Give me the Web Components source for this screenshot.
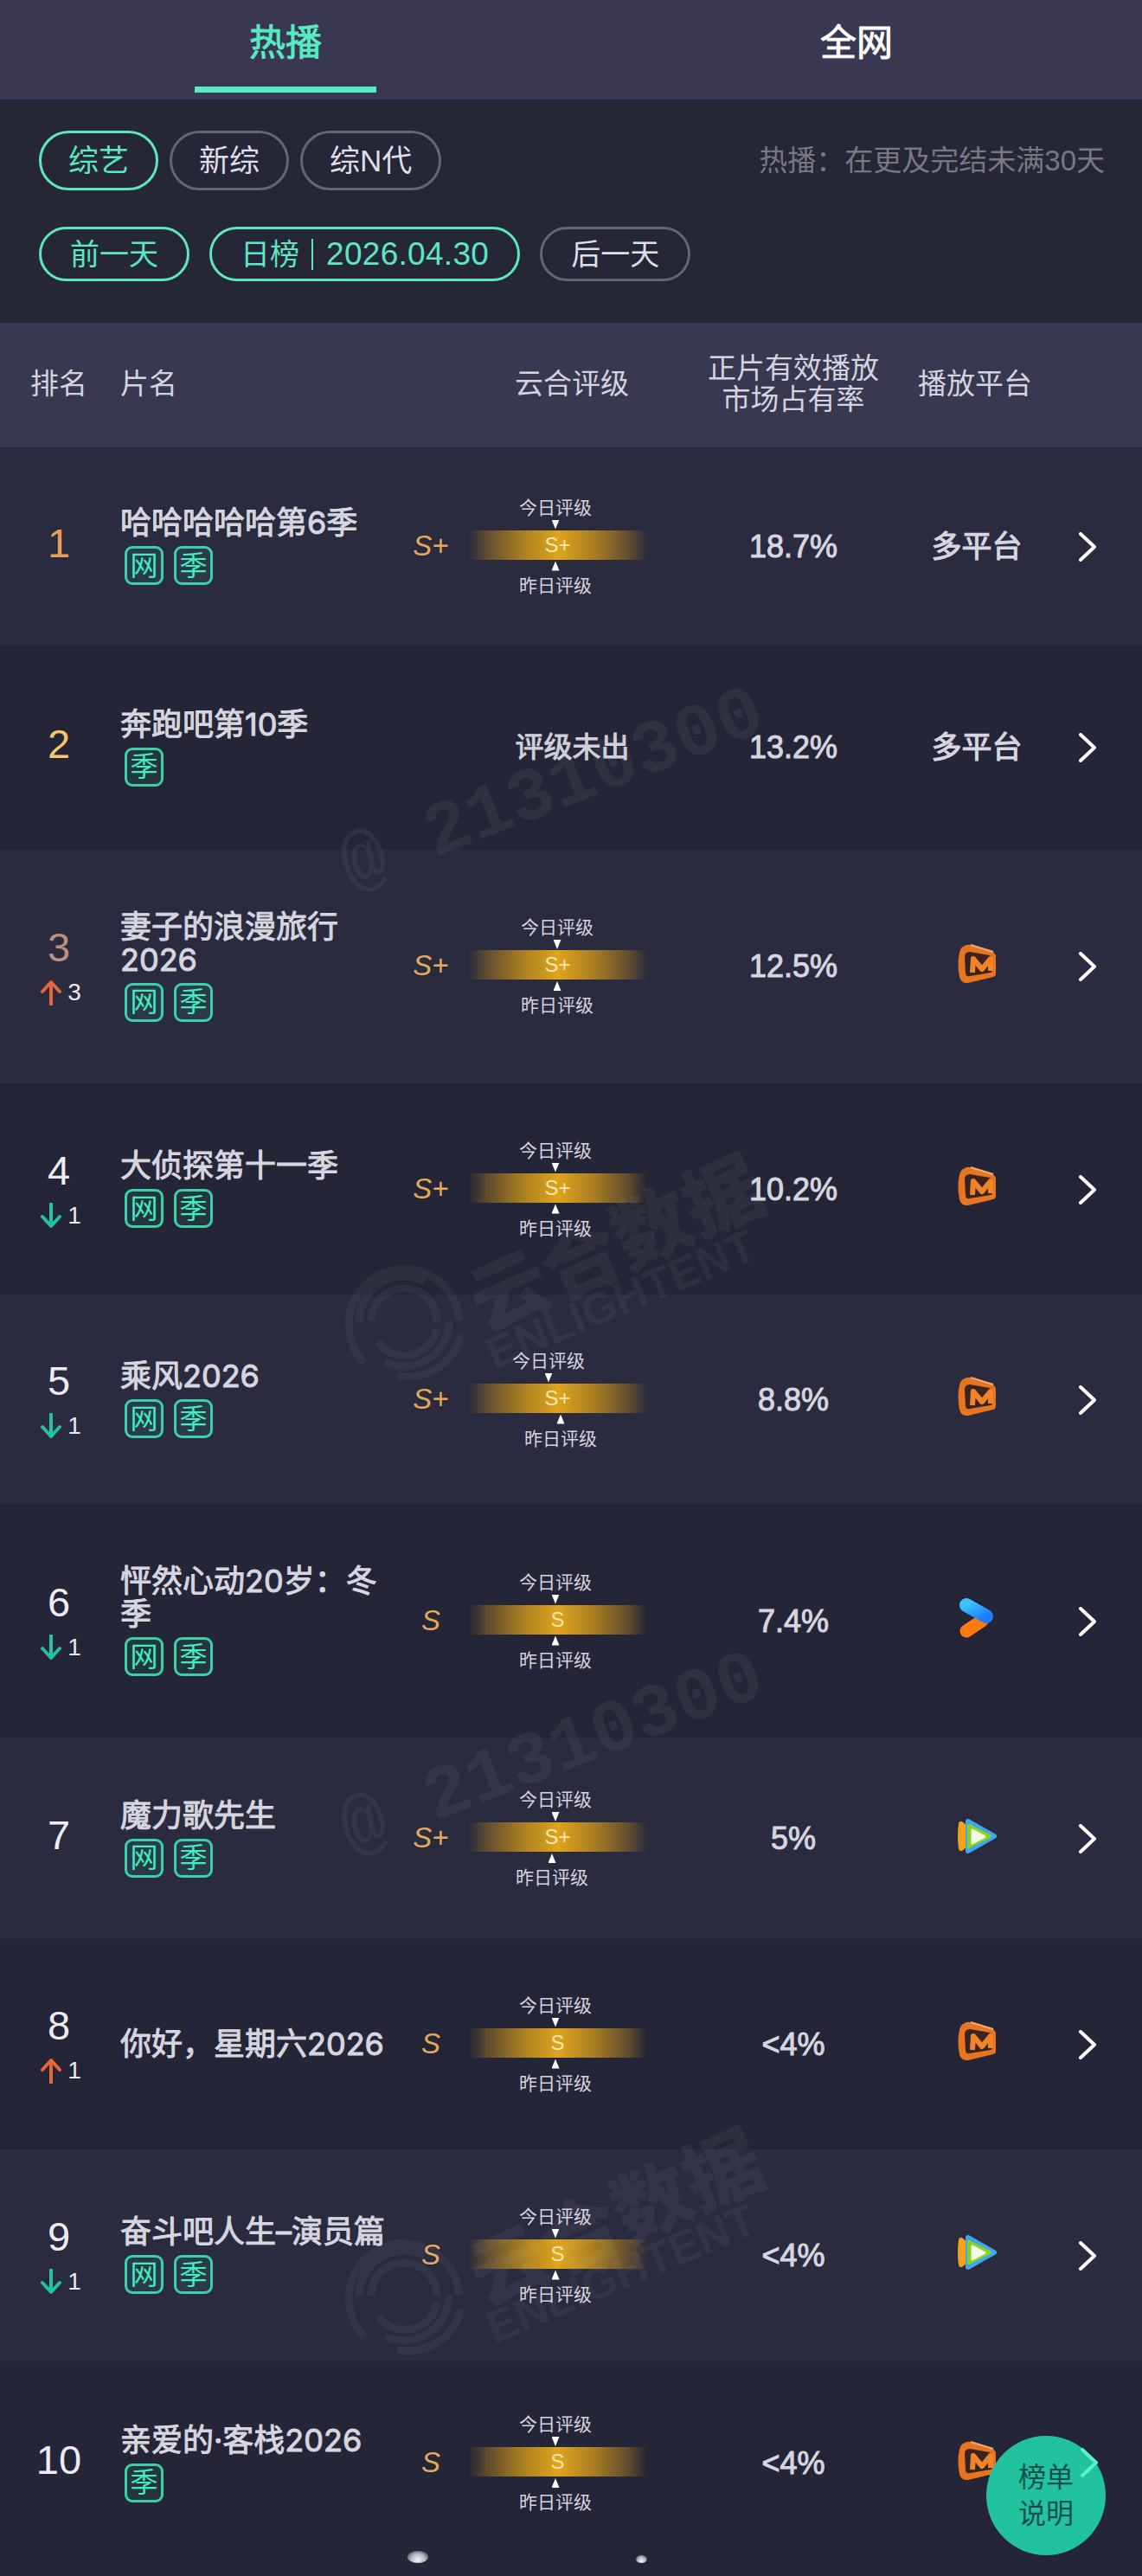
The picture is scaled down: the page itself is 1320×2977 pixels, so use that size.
<!DOCTYPE html>
<html lang="zh">
<head>
<meta charset="utf-8">
<title>云合榜单</title>
<style>
  html, body { margin: 0; padding: 0; background: #242536; }
  body { font-family: "Liberation Sans", "Noto Sans CJK SC", sans-serif; }
  #page { position: relative; width: 1320px; height: 2977px; overflow: hidden; }
</style>
</head>
<body>
<div id="page">
  <rank-tabs></rank-tabs>

  <filter-bar note="热播：在更及完结未满30天">
    <pill-btn slot="top" active>综艺</pill-btn>
    <pill-btn slot="top">新综</pill-btn>
    <pill-btn slot="top">综N代</pill-btn>
    <pill-btn slot="date" small active>前一天</pill-btn>
    <pill-btn slot="date" small active>日榜<i></i><b>2026.04.30</b></pill-btn>
    <pill-btn slot="date" small>后一天</pill-btn>
  </filter-bar>

  <table-head></table-head>

  <rank-row no="1" tone="#e99f56" h="229" odd share="18.7%">
    <span slot="title">哈哈哈哈哈第6季</span>
    <show-tag slot="tags">网</show-tag><show-tag slot="tags">季</show-tag>
    <grade-meter slot="rating" grade="S+" today="-3" yesterday="-3"></grade-meter>
    <platform-mark slot="platform" label="多平台"></platform-mark>
  </rank-row>

  <rank-row no="2" tone="#f4c76b" h="236" share="13.2%">
    <span slot="title">奔跑吧第10季</span>
    <show-tag slot="tags">季</show-tag>
    <grade-meter slot="rating" none></grade-meter>
    <platform-mark slot="platform" label="多平台"></platform-mark>
  </rank-row>

  <rank-row no="3" tone="#bd8f7d" h="270" odd share="12.5%" dir="up" by="3">
    <span slot="title">妻子的浪漫旅行2026</span>
    <show-tag slot="tags">网</show-tag><show-tag slot="tags">季</show-tag>
    <grade-meter slot="rating" grade="S+" today="-1" yesterday="-1"></grade-meter>
    <platform-mark slot="platform" kind="mango"></platform-mark>
  </rank-row>

  <rank-row no="4" h="245" share="10.2%" dir="down" by="1">
    <span slot="title">大侦探第十一季</span>
    <show-tag slot="tags">网</show-tag><show-tag slot="tags">季</show-tag>
    <grade-meter slot="rating" grade="S+" today="-3" yesterday="-3"></grade-meter>
    <platform-mark slot="platform" kind="mango"></platform-mark>
  </rank-row>

  <rank-row no="5" h="241" odd share="8.8%" dir="down" by="1">
    <span slot="title">乘风2026</span>
    <show-tag slot="tags">网</show-tag><show-tag slot="tags">季</show-tag>
    <grade-meter slot="rating" grade="S+" today="-11" yesterday="3"></grade-meter>
    <platform-mark slot="platform" kind="mango"></platform-mark>
  </rank-row>

  <rank-row no="6" h="271" share="7.4%" dir="down" by="1">
    <span slot="title">怦然心动20岁：冬季</span>
    <show-tag slot="tags">网</show-tag><show-tag slot="tags">季</show-tag>
    <grade-meter slot="rating" grade="S" today="-3" yesterday="-3"></grade-meter>
    <platform-mark slot="platform" kind="youku"></platform-mark>
  </rank-row>

  <rank-row no="7" h="232" odd share="5%">
    <span slot="title">魔力歌先生</span>
    <show-tag slot="tags">网</show-tag><show-tag slot="tags">季</show-tag>
    <grade-meter slot="rating" grade="S+" today="-3" yesterday="-7"></grade-meter>
    <platform-mark slot="platform" kind="tencent"></platform-mark>
  </rank-row>

  <rank-row no="8" h="243" share="&lt;4%" dir="up" by="1">
    <span slot="title">你好，星期六2026</span>
    <grade-meter slot="rating" grade="S" today="-3" yesterday="-3"></grade-meter>
    <platform-mark slot="platform" kind="mango"></platform-mark>
  </rank-row>

  <rank-row no="9" h="245" odd share="&lt;4%" dir="down" by="1">
    <span slot="title">奋斗吧人生–演员篇</span>
    <show-tag slot="tags">网</show-tag><show-tag slot="tags">季</show-tag>
    <grade-meter slot="rating" grade="S" today="-3" yesterday="-3"></grade-meter>
    <platform-mark slot="platform" kind="tencent"></platform-mark>
  </rank-row>

  <rank-row no="10" h="248" pb="12" share="&lt;4%">
    <span slot="title">亲爱的·客栈2026</span>
    <show-tag slot="tags">季</show-tag>
    <grade-meter slot="rating" grade="S" today="-3" yesterday="-3"></grade-meter>
    <platform-mark slot="platform" kind="mango"></platform-mark>
  </rank-row>

  <stamp-id style="left:413px;top:1046px"></stamp-id>
  <stamp-id style="left:413px;top:2160px"></stamp-id>
  <stamp-brand style="left:399px;top:1334px"></stamp-brand>
  <stamp-brand style="left:399px;top:2460px"></stamp-brand>

  <edge-glint style="left:471px;top:2948px;width:24px;height:14px"></edge-glint>
  <edge-glint style="left:735px;top:2953px;width:13px;height:9px"></edge-glint>

  <help-fab></help-fab>
</div>

<script>
const CJK = `"Liberation Sans", "Noto Sans CJK SC", sans-serif`;
// digits in the titles are proportional, the 1 is narrow
const TITLE = `Inter, "Noto Sans CJK SC", sans-serif`;

class RankTabs extends HTMLElement {
  constructor() {
    super();
    this.attachShadow({mode: "open"}).innerHTML = `
      <style>
        :host { display: flex; height: 115px; background: #393850; font: 42px ${CJK}; -webkit-text-stroke: .9px; }
        .tab { flex: 1; display: flex; flex-direction: column; align-items: center; color: #fff; }
        .tab span { line-height: 50px; margin-top: 25px; }
        .on { color: #58eac3; }
        .on::after { content: ""; width: 210px; height: 7px; margin-top: 25px; background: #58eac3; }
      </style>
      <div class="tab on"><span>热播</span></div>
      <div class="tab"><span>全网</span></div>
    `;
  }
}
customElements.define("rank-tabs", RankTabs);

class FilterBar extends HTMLElement {
  constructor() {
    super();
    this.attachShadow({mode: "open"}).innerHTML = `
      <style>
        :host { display: block; box-sizing: border-box; height: 258px; padding: 36px 43px 0 45px; background: #252636; }
        .line { display: flex; align-items: center; gap: 13px; }
        .date { margin-top: 42px; gap: 23px; }
        .note { margin-left: auto; font: 33px/40px ${CJK}; color: #78787f; }
      </style>
      <div class="line"><slot name="top"></slot><span class="note">${this.getAttribute("note")}</span></div>
      <div class="line date"><slot name="date"></slot></div>
    `;
  }
}
customElements.define("filter-bar", FilterBar);

class PillBtn extends HTMLElement {
  constructor() {
    super();
    const small = this.hasAttribute("small");
    const active = this.hasAttribute("active");
    this.attachShadow({mode: "open"}).innerHTML = `
      <style>
        :host {
          display: inline-flex; align-items: center; box-sizing: border-box;
          height: ${small ? 63 : 69}px; padding: 0 ${small ? 33 : 31}px;
          border: 3px solid ${active ? "#5de6c3" : "#66666e"}; border-radius: 36px;
          font: ${small ? 34 : 35}px/40px ${CJK}; color: ${active ? "#5de6c3" : "#dfdfe6"};
        }
        ::slotted(i) { width: 2px; height: 36px; margin: 0 15px 0 14px; background: #5de6c3; }
        ::slotted(b) { font-weight: 400; font-size: 37px; letter-spacing: .3px; }
      </style>
      <slot></slot>
    `;
  }
}
customElements.define("pill-btn", PillBtn);

class TableHead extends HTMLElement {
  constructor() {
    super();
    this.attachShadow({mode: "open"}).innerHTML = `
      <style>
        :host {
          display: grid; grid-template-columns: 136px 400px 250px 262px 158px; align-items: center;
          box-sizing: border-box; height: 144px; padding-bottom: 2px;
          background: #383850; color: #d4d4df; font: 33px/36px ${CJK};
        }
        div { text-align: center; }
        .name { text-align: left; padding-left: 3px; }
      </style>
      <div>排名</div>
      <div class="name">片名</div>
      <div>云合评级</div>
      <div>正片有效播放<br>市场占有率</div>
      <div>播放平台</div>
    `;
  }
}
customElements.define("table-head", TableHead);

class RankRow extends HTMLElement {
  constructor() {
    super();
    const dir = this.getAttribute("dir");
    const arrow = dir === "up"
      ? `<path d="M13 29V4M3 14 13 3l10 11" stroke="#e8653a"/>`
      : `<path d="M13 1v25M3 16l10 11 10-11" stroke="#22c39e"/>`;
    const delta = dir ? `
      <div class="delta">
        <svg width="26" height="30" viewBox="0 0 26 30" fill="none" stroke-width="4" stroke-linecap="round" stroke-linejoin="round">${arrow}</svg>
        <span>${this.getAttribute("by")}</span>
      </div>` : "";
    const tags = this.querySelector('[slot="tags"]')
      ? `<div class="tags"><slot name="tags"></slot></div>` : "";
    this.attachShadow({mode: "open"}).innerHTML = `
      <style>
        :host {
          display: grid; grid-template-columns: 136px 332px 60px 234px 310px 114px 134px; align-items: center;
          box-sizing: border-box; height: ${this.getAttribute("h")}px; padding-bottom: ${this.getAttribute("pb") || 0}px;
          background: ${this.hasAttribute("odd") ? "#2a2b3f" : "#242536"};
        }
        .rank { display: flex; flex-direction: column; align-items: center; }
        .no { font: 47px/52px "Liberation Sans", sans-serif; margin-bottom: 8px; color: ${this.getAttribute("tone") || "#ececf1"}; }
        .delta { display: flex; align-items: center; gap: 6px; height: 36px; margin-left: 4px; color: #e9e9ee; font: 28px/36px "Liberation Sans", sans-serif; }
        .info { padding-left: 3px; width: 316px; margin-top: -2px; font: 36px/38px ${TITLE}; -webkit-text-stroke: 1px; color: #d6d6df; }
        .tags { display: flex; gap: 12px; margin: 8px 0 0 5px; -webkit-text-stroke: 0; }
        ::slotted([slot="rating"]) { grid-column: 3 / span 2; }
        .share { text-align: center; font: 36px/44px "Liberation Sans", sans-serif; -webkit-text-stroke: 1px; color: #d6d6df; }
        .plat { display: flex; justify-content: center; }
        .go { display: flex; justify-content: center; padding-left: 7px; }
      </style>
      <div class="rank"><div class="no">${this.getAttribute("no")}</div>${delta}</div>
      <div class="info">
        <slot name="title"></slot>
        ${tags}
      </div>
      <slot name="rating"></slot>
      <div class="share">${this.getAttribute("share").replace("<", "&lt;")}</div>
      <div class="plat"><slot name="platform"></slot></div>
      <div class="go">
        <svg width="22" height="34" viewBox="0 0 22 34" fill="none" stroke="#fff" stroke-width="4" stroke-linecap="round" stroke-linejoin="round"><path d="M3 2 19 17 3 32"/></svg>
      </div>
    `;
  }
}
customElements.define("rank-row", RankRow);

class ShowTag extends HTMLElement {
  constructor() {
    super();
    this.attachShadow({mode: "open"}).innerHTML = `
      <style>
        :host {
          display: inline-flex; align-items: center; justify-content: center; box-sizing: border-box;
          width: 45px; height: 45px; border: 3px solid #3bd0ac; border-radius: 9px;
          background: rgba(47, 200, 160, .1); color: #3fefc0; font: 32px/38px ${CJK};
        }
      </style>
      <slot></slot>
    `;
  }
}
customElements.define("show-tag", ShowTag);

class GradeMeter extends HTMLElement {
  constructor() {
    super();
    const root = this.attachShadow({mode: "open"});
    if (this.hasAttribute("none")) {
      root.innerHTML = `
        <style>
          :host { display: block; padding-left: 93px; text-align: center; color: #cfcfd9; font: 33px/40px ${CJK}; -webkit-text-stroke: 1px; }
        </style>
        <div>评级未出</div>
      `;
      return;
    }
    const grade = this.getAttribute("grade");
    // offset in px from the strip centre; a centred flex item moves half its margin
    const today = Number(this.getAttribute("today")) * 2;
    const yesterday = Number(this.getAttribute("yesterday")) * 2;
    root.innerHTML = `
      <style>
        :host { display: grid; grid-template-columns: 60px 234px; align-items: center; }
        .grade { text-align: center; font: italic 33px/40px "Liberation Sans", sans-serif; color: #e4a95a; margin-top: -2px; }
        .meter { display: flex; flex-direction: column; align-items: center; color: #d4d4dd; font: 21px/24px ${CJK}; }
        .strip {
          width: 206px; height: 34px; display: flex; align-items: center; justify-content: center;
          margin-left: -1px;
          background: linear-gradient(90deg, rgba(180,130,30,0) 0, rgba(150,110,35,.5) 10%, #a97f22 30%, #e0a41d 50%, #a97f22 70%, rgba(150,110,35,.5) 90%, rgba(180,130,30,0) 100%);
          color: #f8e8b4; font: 24px/34px "Liberation Sans", sans-serif;
        }
        .tri { width: 9px; height: 11px; background: #fff; }
        .down { clip-path: polygon(0 0, 100% 0, 50% 100%); margin: 2px 0 1px; }
        .up { clip-path: polygon(50% 0, 100% 100%, 0 100%); margin: 2px 0 5px; }
        .t { margin-left: ${today}px; }
        .y { margin-left: ${yesterday}px; }
      </style>
      <div class="grade">${grade}</div>
      <div class="meter">
        <span class="t">今日评级</span>
        <i class="tri down t"></i>
        <div class="strip">${grade}</div>
        <i class="tri up y"></i>
        <span class="y">昨日评级</span>
      </div>
    `;
  }
}
customElements.define("grade-meter", GradeMeter);

const PLATFORM_LOGOS = {
  mango: `
    <svg width="44" height="46" viewBox="0 0 44 46">
      <path d="M8 2Q11 0 15 1L41 9 44 13V34Q44 37 41 38L12 45Q4 46 2 38-1 22 2 10 3 4 8 2Z" fill="#e8741f"/>
      <path d="M14 9Q8 9 8 15L9 33Q9 38 14 37L38 33Q40 33 40 30V15L37 13Z" fill="#3a2422"/>
      <path d="M17 33 18 17 28 29 38 17 38 31" fill="none" stroke="#ef8428" stroke-width="6" stroke-linejoin="round"/>
      <path d="M15 1 41 9" stroke="#f0a878" stroke-width="2"/>
    </svg>`,
  youku: `
    <svg width="42" height="48" viewBox="0 0 42 48" fill="none" stroke-linecap="round">
      <defs>
        <linearGradient id="yb" x1="0" y1="0" x2="1" y2="1"><stop offset="0" stop-color="#3cc2ff"/><stop offset="1" stop-color="#1f7cff"/></linearGradient>
      </defs>
      <path d="M9 39 27 27" stroke="#ff7a12" stroke-width="15"/>
      <path d="M9 9 32 22" stroke="url(#yb)" stroke-width="16"/>
    </svg>`,
  tencent: `
    <svg width="47" height="44" viewBox="0 0 47 44" stroke-linejoin="round">
      <path d="M5 8Q3 22 5 36L22 22Z" fill="#f3a11d" stroke="#f3a11d" stroke-width="6"/>
      <path d="M13 5V39L43 22Z" fill="#3da7f0" stroke="#3da7f0" stroke-width="6"/>
      <path d="M14 10V34L38 22Z" fill="#8ed020" stroke="#8ed020" stroke-width="4"/>
      <path d="M18 15V30L32 22.5Z" fill="#f2f7e6" stroke="#f2f7e6" stroke-width="3"/>
    </svg>`
};

class PlatformMark extends HTMLElement {
  constructor() {
    super();
    const label = this.getAttribute("label");
    this.attachShadow({mode: "open"}).innerHTML = `
      <style>
        :host { display: flex; align-items: center; justify-content: center; color: #d6d6df; font: 35px/44px ${CJK}; -webkit-text-stroke: 1.1px; }
        svg { display: block; margin-top: -7px; overflow: visible; }
      </style>
      ${label ? label : PLATFORM_LOGOS[this.getAttribute("kind")]}
    `;
  }
}
customElements.define("platform-mark", PlatformMark);

class StampId extends HTMLElement {
  constructor() {
    super();
    this.attachShadow({mode: "open"}).innerHTML = `
      <style>
        :host {
          position: absolute; width: 0; height: 0; pointer-events: none;
          white-space: pre; font: 700 86px/86px "Liberation Mono", monospace; color: rgba(255, 255, 255, .05);
        }
        div { position: absolute; left: 0; bottom: 0; transform-origin: 0 100%; transform: rotate(-21deg); }
      </style>
      <div>@ 21310300</div>
    `;
  }
}
customElements.define("stamp-id", StampId);

class StampBrand extends HTMLElement {
  constructor() {
    super();
    this.attachShadow({mode: "open"}).innerHTML = `
      <style>
        :host { position: absolute; width: 480px; height: 270px; pointer-events: none; color: rgba(255, 255, 255, .045); }
        svg { position: absolute; left: 0; top: 125px; }
        .cn, .en { position: absolute; white-space: nowrap; transform-origin: 0 100%; transform: rotate(-24deg); }
        .cn { left: 168px; top: 128px; font: 900 90px/92px ${CJK}; }
        .en { left: 176px; top: 204px; font: 700 52px/52px "Liberation Sans", sans-serif; transform: rotate(-23deg); }
      </style>
      <svg width="136" height="136" viewBox="0 0 136 136" fill="none" stroke="rgba(255,255,255,.045)" stroke-width="9">
        <path d="M22 116A64 64 0 1 1 132 68"/>
        <path d="M134 84A64 64 0 0 1 60 131"/>
        <path d="M30 68A38 38 0 0 1 106 68"/>
        <path d="M16 68A52 52 0 0 1 92 22"/>
        <path d="M120 68A52 52 0 0 1 46 115"/>
        <path d="M106 76A38 38 0 0 1 38 92"/>
      </svg>
      <div class="cn">云合数据</div>
      <div class="en">ENLIGHTENT</div>
    `;
  }
}
customElements.define("stamp-brand", StampBrand);

class EdgeGlint extends HTMLElement {
  constructor() {
    super();
    this.attachShadow({mode: "open"}).innerHTML = `
      <style>
        :host {
          position: absolute; border-radius: 50%; pointer-events: none;
          background: radial-gradient(ellipse at 50% 75%, #f2f3f5 0, #b9bcc4 45%, rgba(185, 188, 196, 0) 100%);
        }
      </style>
    `;
  }
}
customElements.define("edge-glint", EdgeGlint);

class HelpFab extends HTMLElement {
  constructor() {
    super();
    this.attachShadow({mode: "open"}).innerHTML = `
      <style>
        :host {
          position: absolute; left: 1140px; top: 2815px; width: 138px; height: 138px; border-radius: 50%;
          display: flex; align-items: center; justify-content: center; text-align: center;
          background: #21c29d; color: #124f4d; font: 32px/42px ${CJK};
        }
        svg { position: absolute; left: 108px; top: 14px; }
      </style>
      <div>榜单<br>说明</div>
      <svg width="22" height="34" viewBox="0 0 22 34" fill="none" stroke="#5cf0c8" stroke-width="4" stroke-linecap="round" stroke-linejoin="round"><path d="M3 2 19 17 3 32"/></svg>
    `;
  }
}
customElements.define("help-fab", HelpFab);
</script>
</body>
</html>
